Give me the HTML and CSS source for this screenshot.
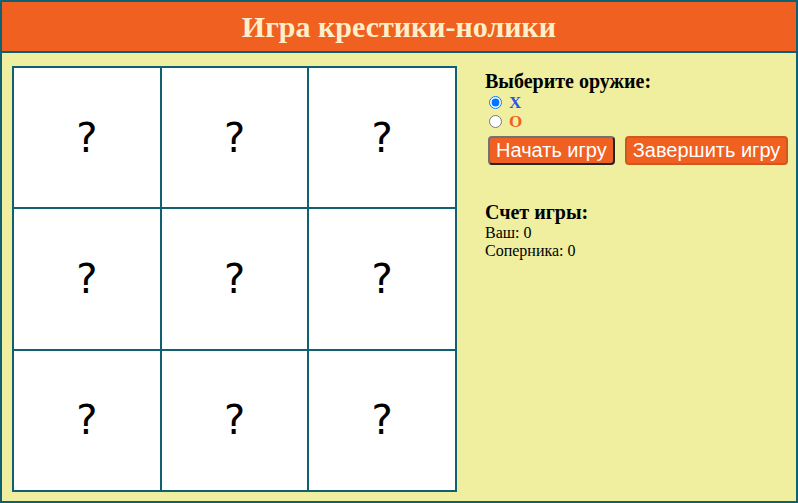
FILE: index.html
```html
<!DOCTYPE html>
<html lang="ru">
<head>
<meta charset="utf-8">
<title>Игра крестики-нолики</title>
<link rel="stylesheet" href="styles.css">
</head>
<body>
<div class="app">
  <header class="header">Игра крестики-нолики</header>
  <main class="main">
    <div class="board">
      <div class="cell">?</div>
      <div class="cell">?</div>
      <div class="cell">?</div>
      <div class="cell">?</div>
      <div class="cell">?</div>
      <div class="cell">?</div>
      <div class="cell">?</div>
      <div class="cell">?</div>
      <div class="cell">?</div>
    </div>
    <aside class="panel">
      <h3 class="title">Выберите оружие:</h3>
      <label class="choice"><input type="radio" name="weapon" checked> <b class="x">X</b></label>
      <label class="choice"><input type="radio" name="weapon"> <b class="o">O</b></label>
      <div class="buttons">
        <button class="btn btn-start">Начать игру</button>
        <button class="btn btn-end">Завершить игру</button>
      </div>
      <h3 class="title score-title">Счет игры:</h3>
      <div class="line">Ваш: 0</div>
      <div class="line">Соперника: 0</div>
    </aside>
  </main>
</div>
</body>
</html>
```
FILE: styles.css
```css
html, body {
  margin: 0;
  padding: 0;
}
body {
  font-family: "Liberation Serif", "Times New Roman", serif;
  font-size: 16px;
  color: #000;
  background: #fff;
}
.app {
  box-sizing: border-box;
  width: 798px;
  height: 503px;
  border: 2px solid #0f6072;
  background: #efef9f;
  display: flex;
  flex-direction: column;
}
.header {
  height: 49px;
  background: #f06020;
  border-bottom: 2px solid #0f6072;
  color: #fdefc9;
  font-weight: bold;
  font-size: 30px;
  display: flex;
  align-items: center;
  justify-content: center;
}
.main {
  display: flex;
  padding: 13px 0 0 10px;
  gap: 28px;
}
.board {
  width: 445px;
  height: 426px;
  box-sizing: border-box;
  display: grid;
  grid-template-columns: 1fr 1fr 1fr;
  grid-template-rows: 1fr 1fr 1fr;
  gap: 2px;
  padding: 2px;
  background: #0f6072;
}
.cell {
  background: #fff;
  display: flex;
  align-items: center;
  justify-content: center;
  font-family: "DejaVu Sans", sans-serif;
  font-size: 40px;
}
.panel {
  display: flex;
  flex-direction: column;
  padding-top: 4px;
}
.title {
  margin: 0;
  font-size: 20px;
  line-height: 23px;
  font-weight: bold;
}
.choice {
  display: flex;
  align-items: center;
  height: 19px;
  gap: 4px;
  font-size: 17px;
}
.choice input {
  margin: 0 3px 0 4px;
  width: 13px;
  height: 13px;
}
.x { color: #2f4ff0; }
.o { color: #f06020; }
.buttons {
  display: flex;
  gap: 10px;
  margin-top: 5px;
  margin-left: 3px;
}
.btn {
  height: 29px;
  padding: 0 6px;
  background: #f06020;
  color: #fff;
  font-family: "Liberation Sans", Arial, sans-serif;
  font-size: 20px;
  border-radius: 4px;
  border: 2px solid #d0581c;
}
.btn-start {
  border-color: #727272 #262626 #262626 #727272;
}
.score-title {
  margin-top: 36px;
}
.line {
  line-height: 18px;
}
```
